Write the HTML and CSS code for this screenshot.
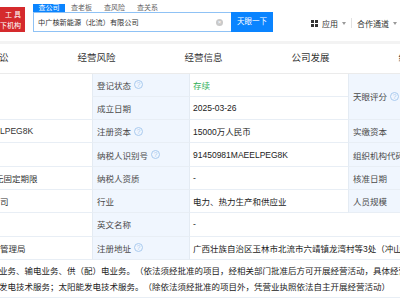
FILE: index.html
```html
<!DOCTYPE html>
<html>
<head>
  <meta charset="utf-8">
  <title>中广核新能源（北流）有限公司</title>
  <link rel="stylesheet" href="styles.css">
</head>
<body>
  <div class="header">
    <div class="logo"><span>工 具</span><span>下机构</span></div>
    <div class="search">
      <div class="search-tabs">
        <span class="active">查公司</span>
        <span>查老板</span>
        <span>查风险</span>
        <span>查关系</span>
      </div>
      <div class="search-row">
        <div class="search-input">中广核新能源（北流）有限公司<i class="clear">×</i></div>
        <div class="search-btn">天眼一下</div>
      </div>
    </div>
    <div class="nav">
      <svg class="apps" width="7" height="7" viewBox="0 0 7 7"><rect x="0" y="0" width="3" height="3"/><rect x="4" y="0" width="3" height="3"/><rect x="0" y="4" width="3" height="3"/><rect x="4" y="4" width="3" height="3"/></svg>
      <span>应用</span>
      <i class="caret"></i>
      <i class="sep"></i>
      <span>合作通道</span>
      <i class="caret"></i>
    </div>
  </div>
  <div class="shade"></div>

  <div class="tabs">
    <div class="tab">司法诉讼</div>
    <div class="tab">经营风险</div>
    <div class="tab">经营信息</div>
    <div class="tab">公司发展</div>
    <div class="tab">经营状况</div>
  </div>

  <div class="info">
    <div class="cell first tall"></div>
    <div class="cell label">登记状态<i class="tip">?</i></div>
    <div class="cell value green">存续</div>
    <div class="cell label tall">天眼评分<i class="tip">?</i></div>
    <div class="cell value tall"></div>

    <div class="cell label">成立日期</div>
    <div class="cell value">2025-03-26</div>

    <div class="cell first">LPEG8K</div>
    <div class="cell label">注册资本<i class="tip">?</i></div>
    <div class="cell value">15000万人民币</div>
    <div class="cell label">实缴资本</div>
    <div class="cell value"></div>

    <div class="cell first"></div>
    <div class="cell label">纳税人识别号<i class="tip">?</i></div>
    <div class="cell value">91450981MAEELPEG8K</div>
    <div class="cell label">组织机构代码</div>
    <div class="cell value"></div>

    <div class="cell first cut">无固定期限</div>
    <div class="cell label">纳税人资质</div>
    <div class="cell value">-</div>
    <div class="cell label">核准日期</div>
    <div class="cell value"></div>

    <div class="cell first">司</div>
    <div class="cell label">行业</div>
    <div class="cell value">电力、热力生产和供应业</div>
    <div class="cell label">人员规模</div>
    <div class="cell value"></div>

    <div class="cell first"></div>
    <div class="cell label">英文名称</div>
    <div class="cell value wide">-</div>

    <div class="cell first">管理局</div>
    <div class="cell label">注册地址<i class="tip">?</i></div>
    <div class="cell value wide">广西壮族自治区玉林市北流市六靖镇龙湾村等3处（冲山村、六靖村）</div>

    <div class="cell scope">
      <div>业务、输电业务、供（配）电业务。（依法须经批准的项目，经相关部门批准后方可开展经营活动，具体经营项目以相关部门批准文件或许可证件为准）</div>
      <div>发电技术服务；太阳能发电技术服务。（除依法须经批准的项目外，凭营业执照依法自主开展经营活动）</div>
    </div>
  </div>
</body>
</html>
```

FILE: styles.css
```css
* {
  box-sizing: border-box;
}

body {
  margin: 0;
  width: 400px;
  height: 300px;
  overflow: hidden;
  background: #fff;
  color: #333;
  font-family: "Liberation Sans", "Noto Sans CJK SC", sans-serif;
  text-spacing-trim: space-all;
}

/* top bar */
.header {
  display: flex;
  align-items: flex-start;
  height: 41px;
}

.logo {
  display: flex;
  flex-direction: column;
  align-items: flex-end;
  width: 25px;
  height: 25px;
  margin-top: 7px;
  padding: 2px 4px 0 0;
  background: #d52a2d;
  color: #fff;
  font-size: 7px;
  line-height: 11px;
  white-space: nowrap;
  overflow: hidden;
}

.search {
  margin-left: 8px;
  margin-top: 4px;
}

.search-tabs {
  display: flex;
  height: 8px;
  font-size: 7px;
  line-height: 8px;
  color: #666;
}

.search-tabs span {
  width: 33px;
  text-align: center;
}

.search-tabs .active {
  width: 32px;
  background: #0a84ff;
  color: #fff;
}

.search-row {
  display: flex;
  height: 20px;
}

.search-input {
  display: flex;
  align-items: center;
  justify-content: space-between;
  width: 198px;
  padding: 0 8px 0 4px;
  border: 1px solid #8fc2f5;
  border-right: none;
  font-size: 7.2px;
  color: #333;
}

.clear {
  width: 7px;
  height: 7px;
  border-radius: 50%;
  background: #c9c9c9;
  color: #fff;
  font-size: 6px;
  font-style: normal;
  line-height: 7px;
  text-align: center;
}

.search-btn {
  width: 42px;
  background: #0a84ff;
  color: #fff;
  font-size: 7.5px;
  line-height: 20px;
  text-align: center;
}

.nav {
  display: flex;
  align-items: center;
  height: 10px;
  margin: 18px 3px 0 auto;
  font-size: 8px;
  color: #333;
}

.apps {
  fill: #333;
  margin-right: 4px;
}

.caret {
  width: 0;
  height: 0;
  margin-left: 4px;
  border-top: 3px solid #999;
  border-left: 2px solid transparent;
  border-right: 2px solid transparent;
}

.sep {
  width: 1px;
  height: 10px;
  margin: 0 5px;
  background: #e2e2e2;
}

.shade {
  height: 3px;
  background: #f3f3f3;
}

/* section tabs */
.tabs {
  display: flex;
  height: 29.5px;
  margin-left: -64px;
  border-bottom: 1px solid #ebebeb;
}

.tab {
  flex: none;
  width: 107px;
  text-align: center;
  font-size: 9.5px;
  line-height: 28px;
  color: #333;
}

/* info table */
.info {
  display: grid;
  grid-template-columns: 92px 97px 159px 97px 60px;
  grid-template-rows: repeat(8, 23.3px) auto;
  font-size: 8.5px;
}

.cell {
  display: flex;
  align-items: center;
  padding-left: 3px;
  border-bottom: 1px solid #e8eef5;
  border-left: 1px solid #e4ebf3;
  white-space: nowrap;
  overflow: hidden;
}

.first {
  padding-left: 0;
  border-left: none;
}

.cut {
  text-indent: -5px;
}

.label {
  padding-left: 4px;
  background: #f0f6fe;
  color: #4a4a4a;
}

.value {
  color: #222;
}

.green {
  color: #2eaf57;
}

.tall {
  grid-row: span 2;
}

.wide {
  grid-column: span 3;
}

.scope {
  display: block;
  grid-column: span 5;
  padding: 3px 0 2px;
  border-left: none;
  line-height: 16px;
  color: #222;
}

.scope div {
  text-indent: -1px;
}

.tip {
  display: inline-flex;
  align-items: center;
  justify-content: center;
  width: 9px;
  height: 9px;
  margin-left: 3px;
  border: 1px solid #a9caef;
  border-radius: 50%;
  color: #a9caef;
  font-size: 6.5px;
  font-style: normal;
  text-indent: 0;
}
```
